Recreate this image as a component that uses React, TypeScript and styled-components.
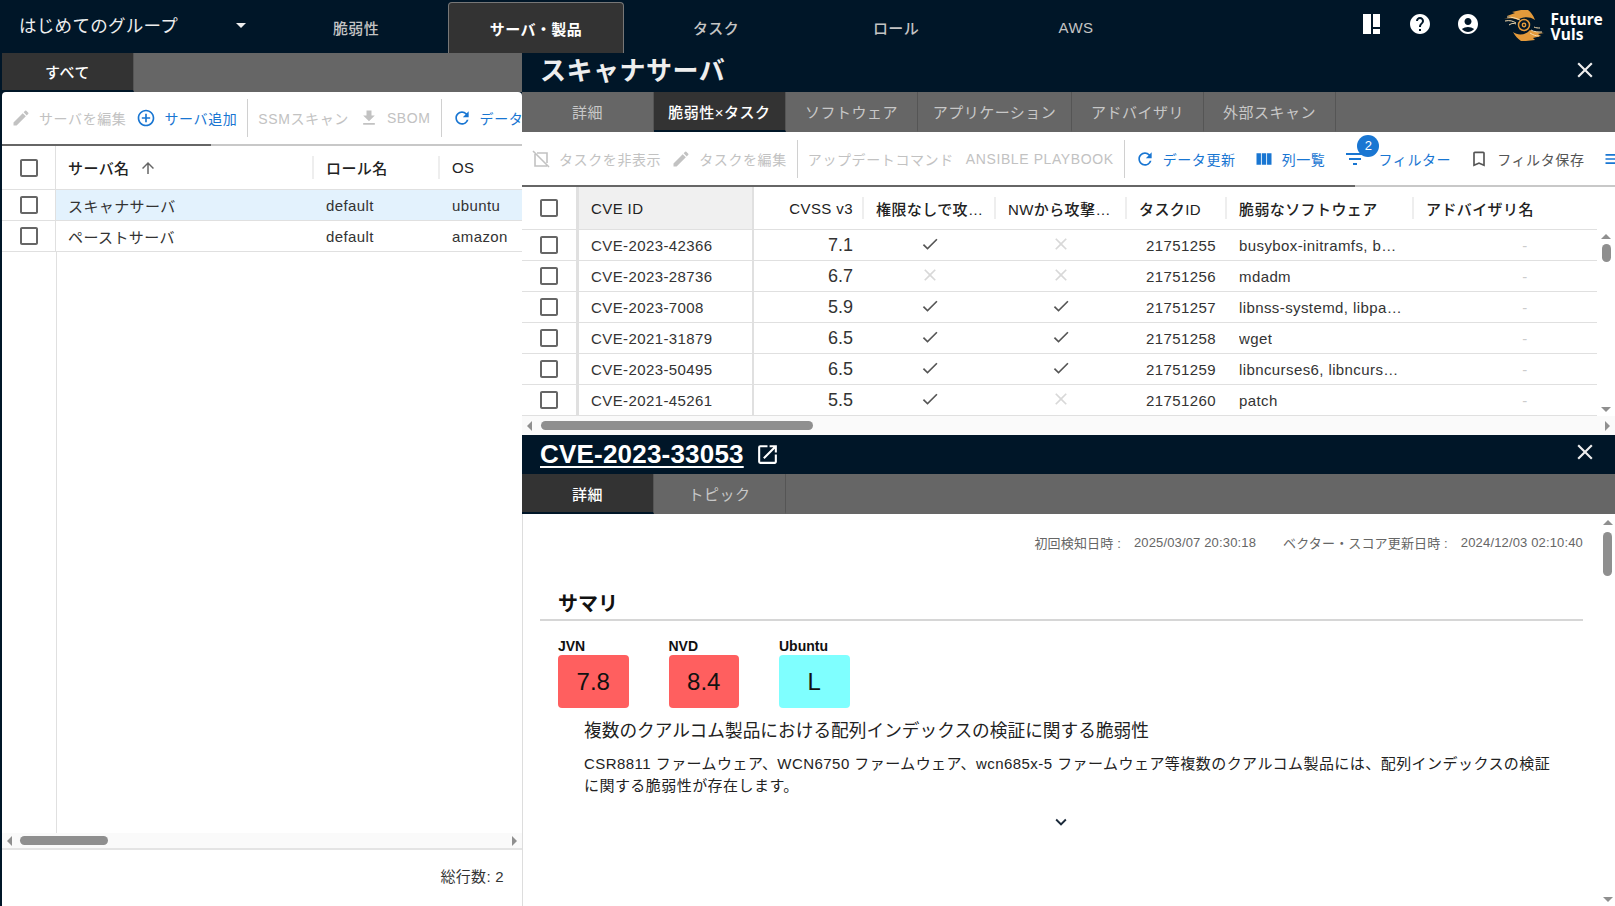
import styled, { createGlobalStyle } from "styled-components";
import {
  MdAccountCircle,
  MdAddCircleOutline,
  MdArrowDropDown,
  MdArrowUpward,
  MdBookmarkBorder,
  MdCheck,
  MdCheckBoxOutlineBlank,
  MdClose,
  MdEdit,
  MdExpandMore,
  MdFileDownload,
  MdFilterList,
  MdHelp,
  MdMenu,
  MdOpenInNew,
  MdRefresh,
  MdViewColumn,
} from "react-icons/md";

const SANS = `"Liberation Sans", "Noto Sans CJK JP", sans-serif`;
const NAVY = "#001628";

const GlobalStyle = createGlobalStyle`
  html, body {
    margin: 0;
    padding: 0;
    width: 1615px;
    height: 906px;
    overflow: hidden;
    background: ${NAVY};
    font-family: ${SANS};
  }
`;

const Page = styled.div`
  width: 1615px;
  height: 906px;
  display: flex;
  flex-direction: column;
  overflow: hidden;
`;

const Header = styled.header`
  height: 53px;
  flex: none;
  display: flex;
  align-items: flex-end;
  background: ${NAVY};
`;

const GroupSelect = styled.div`
  width: 266px;
  height: 53px;
  box-sizing: border-box;
  display: flex;
  align-items: center;
  padding: 0 13px 4px 19px;
  justify-content: space-between;
  color: #eee;
  font-size: 17.5px;
  letter-spacing: 0.3px;

  svg {
    font-size: 24px;
  }
`;

const Nav = styled.nav`
  display: flex;
  flex: 1;
  align-items: flex-end;
`;

const NavTab = styled.div<{ $active?: boolean }>`
  width: 176px;
  height: 51px;
  margin: 0 2px;
  box-sizing: border-box;
  display: flex;
  align-items: center;
  justify-content: center;
  font-size: 15px;
  font-weight: ${(p) => (p.$active ? 700 : 500)};
  letter-spacing: 0.4px;
  color: ${(p) => (p.$active ? "#fff" : "#c4c4c4")};
  background: ${(p) => (p.$active ? "#333" : "transparent")};
  border: ${(p) => (p.$active ? "1px solid #777" : "none")};
  border-bottom: none;
  border-radius: 4px 4px 0 0;
`;

const HeaderIcons = styled.div`
  height: 53px;
  display: flex;
  align-items: center;
  color: #fff;
  padding-right: 12px;
  padding-bottom: 5px;
  box-sizing: border-box;
`;

const HeaderIcon = styled.span`
  width: 48px;
  display: flex;
  justify-content: center;
  font-size: 24px;
`;

const LogoWrap = styled.div`
  display: flex;
  align-items: center;
  gap: 7px;
  margin: 3px 0 0 12px;
`;

const LogoText = styled.div`
  font-family: "Noto Sans", sans-serif;
  font-weight: 700;
  font-size: 15.5px;
  line-height: 14.5px;
  padding-top: 2px;
  color: #fff;
  letter-spacing: 0.2px;
`;

const Main = styled.main`
  flex: 1;
  display: flex;
  min-height: 0;
`;

const LeftPane = styled.section`
  width: 520px;
  margin-left: 2px;
  flex: none;
  display: flex;
  flex-direction: column;
`;

const RightPane = styled.section`
  flex: 1;
  min-width: 0;
  display: flex;
  flex-direction: column;
  background: #fff;
`;

const TabStrip = styled.div<{ $height?: number }>`
  height: ${(p) => p.$height ?? 40}px;
  flex: none;
  display: flex;
  background: #666;
`;

const PaneTab = styled.div<{ $active?: boolean; $wide?: boolean }>`
  width: ${(p) => (p.$wide ? 154 : 132)}px;
  box-sizing: border-box;
  display: flex;
  align-items: center;
  justify-content: center;
  font-size: 15px;
  font-weight: ${(p) => (p.$active ? 500 : 400)};
  letter-spacing: 0.5px;
  color: ${(p) => (p.$active ? "#fff" : "#c8c8c8")};
  background: ${(p) => (p.$active ? "#333" : "transparent")};
  border-right: 1px solid #555;
  border-bottom: 2px solid ${(p) => (p.$active ? NAVY : "transparent")};
`;

const Card = styled.div`
  flex: 1;
  min-height: 0;
  display: flex;
  flex-direction: column;
  background: #fff;
  border-radius: 4px 4px 0 0;
  overflow: hidden;
`;

const Toolbar = styled.div<{ $height: number }>`
  height: ${(p) => p.$height}px;
  flex: none;
  display: flex;
  align-items: center;
  padding-left: 4px;
  overflow: hidden;
  white-space: nowrap;
`;

const ToolButton = styled.div<{ $tone?: "off" | "blue" | "dark"; $ml?: number }>`
  flex: none;
  display: flex;
  align-items: center;
  gap: 8px;
  padding: 0 5px;
  margin-left: ${(p) => p.$ml ?? 0}px;
  font-size: 14px;
  letter-spacing: 0.6px;
  position: relative;
  color: ${(p) =>
    p.$tone === "blue" ? "#1976d2" : p.$tone === "dark" ? "#555" : "#c2c2c2"};

  svg {
    font-size: 20px;
    flex: none;
  }
`;

const FilterButton = styled(ToolButton)`
  gap: 11px;

  svg {
    font-size: 24px;
  }
`;

const ToolDivider = styled.span`
  flex: none;
  width: 1px;
  height: 38px;
  margin: 0 5px;
  background: #d0d0d0;
`;

const Badge = styled.span`
  position: absolute;
  left: 19px;
  top: -12px;
  width: 22px;
  height: 22px;
  border-radius: 50%;
  background: #1976d2;
  color: #fff;
  font-size: 13px;
  letter-spacing: 0;
  display: flex;
  align-items: center;
  justify-content: center;
`;

const Progress = styled.div<{ $done: number }>`
  height: 2px;
  flex: none;
  background: linear-gradient(
    to right,
    #666 ${(p) => p.$done}px,
    #c8c8c8 ${(p) => p.$done}px
  );
`;

const Row = styled.div<{ $cols: string; $height: number; $selected?: boolean }>`
  flex: none;
  display: grid;
  grid-template-columns: ${(p) => p.$cols};
  height: ${(p) => p.$height}px;
  box-sizing: border-box;
  border-bottom: 1px solid #e0e0e0;
  background: ${(p) => (p.$selected ? "#e3f2fd" : "#fff")};
`;

const CheckCell = styled.div<{ $thick?: boolean }>`
  display: flex;
  align-items: center;
  justify-content: center;
  color: #666;
  background: #fff;
  font-size: 24px;
  border-right: ${(p) => (p.$thick ? "3px" : "1px")} solid #e0e0e0;
`;

const HeadCell = styled.div<{ $right?: boolean; $sep?: boolean; $fill?: boolean }>`
  position: relative;
  display: flex;
  align-items: center;
  justify-content: ${(p) => (p.$right ? "flex-end" : "flex-start")};
  min-width: 0;
  padding: 0 11px 0 12px;
  font-size: 15px;
  font-weight: 500;
  letter-spacing: 0.4px;
  color: #222;
  background: ${(p) => (p.$fill ? "#f0f0f0" : "transparent")};
  border-right: ${(p) => (p.$fill ? "2px solid #e0e0e0" : "none")};

  &::after {
    content: "";
    display: ${(p) => (p.$sep ? "block" : "none")};
    position: absolute;
    right: 0;
    top: 10px;
    bottom: 10px;
    width: 2px;
    background: #eee;
  }

  svg {
    margin-left: 10px;
    color: #666;
    font-size: 18px;
  }
`;

const HeadLabel = styled.span`
  overflow: hidden;
  white-space: nowrap;
  text-overflow: ellipsis;
`;

const Cell = styled.div<{ $align?: "right" | "center"; $line?: boolean; $big?: boolean; $dash?: boolean }>`
  min-width: 0;
  display: flex;
  align-items: center;
  justify-content: ${(p) =>
    p.$align === "right" ? "flex-end" : p.$align === "center" ? "center" : "flex-start"};
  padding: 0 11px 0 12px;
  padding-left: ${(p) => (p.$dash ? 50 : 12)}px;
  font-size: ${(p) => (p.$big ? 18 : 15)}px;
  letter-spacing: ${(p) => (p.$big ? 0 : 0.4)}px;
  color: ${(p) => (p.$dash ? "#ccc" : "#333")};
  border-right: ${(p) => (p.$line ? "2px solid #e0e0e0" : "none")};
`;

const CellText = styled.span`
  overflow: hidden;
  white-space: nowrap;
  text-overflow: ellipsis;
`;

const Mark = styled.span<{ $off?: boolean }>`
  display: flex;
  margin: -3px 0 0 -2px;
  font-size: 20px;
  color: ${(p) => (p.$off ? "#d8d8d8" : "#555")};
`;

const Filler = styled.div`
  flex: 1;
  width: 54px;
  border-right: 1px solid #e0e0e0;
`;

const HScroll = styled.div<{ $height: number }>`
  height: ${(p) => p.$height}px;
  flex: none;
  display: flex;
  align-items: center;
  padding: 0 5px;
  background: #fafafa;
`;

const HThumb = styled.div<{ $width: number; $ml: number }>`
  width: ${(p) => p.$width}px;
  margin-left: ${(p) => p.$ml}px;
  height: 9px;
  border-radius: 5px;
  background: #8f8f8f;
`;

const Spacer = styled.div`
  flex: 1;
`;

const Arrow = styled.span<{ $dir: "left" | "right" | "up" | "down" }>`
  flex: none;
  width: 0;
  height: 0;
  border: 5px solid transparent;
  ${(p) =>
    p.$dir === "left"
      ? "border-right-color:#8f8f8f;border-left-width:0;"
      : p.$dir === "right"
        ? "border-left-color:#8f8f8f;border-right-width:0;"
        : p.$dir === "up"
          ? "border-bottom-color:#8f8f8f;border-top-width:0;"
          : "border-top-color:#8f8f8f;border-bottom-width:0;"}
`;

const Footer = styled.footer`
  height: 58px;
  flex: none;
  box-sizing: border-box;
  display: flex;
  align-items: center;
  justify-content: flex-end;
  padding: 0 18px 6px 0;
  border-top: 2px solid #e4e4e4;
  font-size: 15px;
  letter-spacing: 0.3px;
  color: #333;
`;

const TitleBar = styled.div`
  height: 39px;
  flex: none;
  display: flex;
  align-items: center;
  justify-content: space-between;
  padding: 0 17px 0 18px;
  background: ${NAVY};
  color: #eee;

  > svg {
    font-size: 26px;
    margin-top: -5px;
  }
`;

const PaneTitle = styled.h1`
  margin: -9px 0 0;
  font-size: 26px;
  font-weight: 700;
  letter-spacing: 0.5px;
`;

const CveLink = styled.a`
  display: flex;
  align-items: center;
  gap: 11px;
  color: #fff;
  font-size: 26px;
  font-weight: 700;
  text-decoration: underline;
  text-underline-offset: 3px;
  letter-spacing: 0.2px;

  svg {
    font-size: 25px;
  }
`;

const TableArea = styled.div`
  height: 229px;
  flex: none;
  display: flex;
`;

const TableColumn = styled.div`
  flex: 1;
  min-width: 0;
  display: flex;
  flex-direction: column;
`;

const VScroll = styled.div<{ $width: number; $top: number }>`
  width: ${(p) => p.$width}px;
  flex: none;
  box-sizing: border-box;
  padding: ${(p) => p.$top}px 0 4px;
  display: flex;
  flex-direction: column;
  align-items: center;
  background: #fff;
`;

const VThumb = styled.div<{ $height: number; $mt: number }>`
  width: 9px;
  height: ${(p) => p.$height}px;
  margin-top: ${(p) => p.$mt}px;
  border-radius: 5px;
  background: #8f8f8f;
`;

const DetailBody = styled.div`
  flex: 1;
  min-height: 0;
  display: flex;
  border-left: 1px solid #ddd;
  background: #fff;
`;

const DetailContent = styled.div`
  flex: 1;
  min-width: 0;
  box-sizing: border-box;
  padding: 19px 17px 0 17px;
`;

const MetaLine = styled.div`
  display: flex;
  justify-content: flex-end;
  align-items: center;
  gap: 27px;
  font-size: 13px;
  letter-spacing: 0.15px;
  color: #666;
`;

const MetaItem = styled.span`
  display: flex;
  align-items: center;
  gap: 13px;
`;

const SectionTitle = styled.h2`
  margin: 37px 0 0;
  padding: 0 0 0 18px;
  font-size: 20px;
  font-weight: 700;
  line-height: 30px;
  color: #111;
  border-bottom: 2px solid #d6d6d6;
`;

const Scores = styled.div`
  display: flex;
  gap: 40px;
  margin: 17px 0 0 18px;
`;

const Score = styled.div`
  width: 70.5px;
`;

const ScoreLabel = styled.div`
  font-size: 14px;
  font-weight: 700;
  line-height: 17px;
  color: #111;
`;

const ScoreBox = styled.div<{ $bg: string }>`
  height: 53px;
  border-radius: 4px;
  display: flex;
  align-items: center;
  justify-content: center;
  background: ${(p) => p.$bg};
  font-size: 24px;
  color: #111;
`;

const Summary = styled.div`
  padding: 10px 28px 0 44px;
`;

const SummaryTitle = styled.div`
  font-size: 17.7px;
  line-height: 27px;
  color: #222;
`;

const SummaryText = styled.p`
  margin: 8px 0 0;
  font-size: 15px;
  line-height: 21.5px;
  letter-spacing: 0.45px;
  color: #222;
`;

const MoreRow = styled.div`
  display: flex;
  justify-content: center;
  margin-top: 15px;
  padding-right: 2px;
  color: #1b2a3a;
  font-size: 22px;
`;

const LEFT_COLS = "54px 258px 126px 1fr";
const RIGHT_COLS = "57px 175px 110px 132px 131px 100px 187px 1fr";

type Vuln = {
  id: string;
  cvss: string;
  noAuth: boolean;
  network: boolean;
  task: string;
  software: string;
};

const vulns: Vuln[] = [
  { id: "CVE-2023-42366", cvss: "7.1", noAuth: true, network: false, task: "21751255", software: "busybox-initramfs, busybox-static" },
  { id: "CVE-2023-28736", cvss: "6.7", noAuth: false, network: false, task: "21751256", software: "mdadm" },
  { id: "CVE-2023-7008", cvss: "5.9", noAuth: true, network: true, task: "21751257", software: "libnss-systemd, libpam-systemd" },
  { id: "CVE-2021-31879", cvss: "6.5", noAuth: true, network: true, task: "21751258", software: "wget" },
  { id: "CVE-2023-50495", cvss: "6.5", noAuth: true, network: true, task: "21751259", software: "libncurses6, libncursesw6" },
  { id: "CVE-2021-45261", cvss: "5.5", noAuth: true, network: false, task: "21751260", software: "patch" },
];

const servers = [
  { name: "スキャナサーバ", role: "default", os: "ubuntu", selected: true },
  { name: "ペーストサーバ", role: "default", os: "amazon", selected: false },
];

function LayoutIcon() {
  return (
    <svg width="18" height="20" viewBox="0 0 18 20" fill="#fff">
      <rect x="0" y="0" width="8" height="20" />
      <rect x="10" y="0" width="7" height="13" />
      <rect x="10" y="15" width="7" height="5" />
    </svg>
  );
}

function HideIcon() {
  return (
    <svg width="20" height="20" viewBox="0 0 20 20" fill="none" stroke="#c2c2c2" strokeWidth="1.6">
      <path d="M6 4h10v10M16 17H4V5M2 2l16 16" />
    </svg>
  );
}

function Logo() {
  return (
    <svg width="40" height="33" viewBox="0 0 40 33">
      <path d="M0 10l7-2-4-1 8-3-3-1 9-2 7 0c3 2 5 5 7 10-6-4-13-3-17 0-4-2-9-2-14-1z" fill="#e39a3b" />
      <path d="M40 24l-6 1 3 2-8 2 2 2-9 1-5 0c-3-2-6-5-8-9 5 4 13 3 17-2 4 2 9 2 14 3z" fill="#e39a3b" />
      <path d="M3 8c5 0 9 1 13 3M1 12c5-1 8 0 11 2M5 16c3-2 5-2 7-1" stroke="#f7dcae" strokeWidth="1" fill="none" />
      <path d="M38 23c-4 0-8 0-11-2M35 27c-3 0-6-1-9-3M30 18c2 1 4 1 6 1" stroke="#f7dcae" strokeWidth="1" fill="none" />
      <circle cx="20" cy="16" r="5.5" fill={NAVY} stroke="#e39a3b" strokeWidth="1.5" />
      <circle cx="20" cy="16" r="2.4" fill="#e39a3b" />
      <circle cx="20" cy="16" r="1" fill={NAVY} />
    </svg>
  );
}

export default function App() {
  return (
    <Page>
      <GlobalStyle />
      <Header>
        <GroupSelect>
          はじめてのグループ
          <MdArrowDropDown />
        </GroupSelect>
        <Nav>
          <NavTab>脆弱性</NavTab>
          <NavTab $active>サーバ・製品</NavTab>
          <NavTab>タスク</NavTab>
          <NavTab>ロール</NavTab>
          <NavTab>AWS</NavTab>
        </Nav>
        <HeaderIcons>
          <HeaderIcon>
            <LayoutIcon />
          </HeaderIcon>
          <HeaderIcon>
            <MdHelp />
          </HeaderIcon>
          <HeaderIcon>
            <MdAccountCircle />
          </HeaderIcon>
          <LogoWrap>
            <Logo />
            <LogoText>
              Future
              <br />
              Vuls
            </LogoText>
          </LogoWrap>
        </HeaderIcons>
      </Header>

      <Main>
        <LeftPane>
          <TabStrip $height={39}>
            <PaneTab $active>すべて</PaneTab>
          </TabStrip>
          <Card>
            <Toolbar $height={52}>
              <ToolButton>
                <MdEdit />
                サーバを編集
              </ToolButton>
              <ToolButton $tone="blue">
                <MdAddCircleOutline />
                サーバ追加
              </ToolButton>
              <ToolDivider />
              <ToolButton>SSMスキャン</ToolButton>
              <ToolButton>
                <MdFileDownload />
                SBOM
              </ToolButton>
              <ToolDivider />
              <ToolButton $tone="blue">
                <MdRefresh />
                データ更新
              </ToolButton>
            </Toolbar>
            <Progress $done={209} />
            <Row $cols={LEFT_COLS} $height={44}>
              <CheckCell>
                <MdCheckBoxOutlineBlank />
              </CheckCell>
              <HeadCell $sep>
                サーバ名
                <MdArrowUpward />
              </HeadCell>
              <HeadCell $sep>ロール名</HeadCell>
              <HeadCell>OS</HeadCell>
            </Row>
            {servers.map((s) => (
              <Row key={s.name} $cols={LEFT_COLS} $height={31} $selected={s.selected}>
                <CheckCell>
                  <MdCheckBoxOutlineBlank />
                </CheckCell>
                <Cell>{s.name}</Cell>
                <Cell>{s.role}</Cell>
                <Cell>{s.os}</Cell>
              </Row>
            ))}
            <Filler />
            <HScroll $height={15}>
              <Arrow $dir="left" />
              <HThumb $width={88} $ml={8} />
              <Spacer />
              <Arrow $dir="right" />
            </HScroll>
            <Footer>総行数: 2</Footer>
          </Card>
        </LeftPane>

        <RightPane>
          <TitleBar>
            <PaneTitle>スキャナサーバ</PaneTitle>
            <MdClose />
          </TitleBar>
          <TabStrip>
            <PaneTab>詳細</PaneTab>
            <PaneTab $active>脆弱性×タスク</PaneTab>
            <PaneTab>ソフトウェア</PaneTab>
            <PaneTab $wide>アプリケーション</PaneTab>
            <PaneTab>アドバイザリ</PaneTab>
            <PaneTab>外部スキャン</PaneTab>
          </TabStrip>
          <Toolbar $height={53}>
            <ToolButton>
              <HideIcon />
              タスクを非表示
            </ToolButton>
            <ToolButton>
              <MdEdit />
              タスクを編集
            </ToolButton>
            <ToolDivider />
            <ToolButton>アップデートコマンド</ToolButton>
            <ToolButton $ml={2}>ANSIBLE PLAYBOOK</ToolButton>
            <ToolDivider />
            <ToolButton $tone="blue">
              <MdRefresh />
              データ更新
            </ToolButton>
            <ToolButton $tone="blue" $ml={8}>
              <MdViewColumn />
              列一覧
            </ToolButton>
            <FilterButton $tone="blue" $ml={8}>
              <MdFilterList />
              <Badge>2</Badge>
              フィルター
            </FilterButton>
            <ToolButton $tone="dark" $ml={8}>
              <MdBookmarkBorder />
              フィルタ保存
            </ToolButton>
            <ToolButton $tone="blue" $ml={8}>
              <MdMenu />
            </ToolButton>
          </Toolbar>
          <Progress $done={833} />
          <TableArea>
            <TableColumn>
              <Row $cols={RIGHT_COLS} $height={43}>
                <CheckCell $thick>
                  <MdCheckBoxOutlineBlank />
                </CheckCell>
                <HeadCell $fill>CVE ID</HeadCell>
                <HeadCell $right $sep>
                  CVSS v3
                </HeadCell>
                <HeadCell $sep>
                  <HeadLabel>権限なしで攻撃可能</HeadLabel>
                </HeadCell>
                <HeadCell $sep>
                  <HeadLabel>NWから攻撃可能</HeadLabel>
                </HeadCell>
                <HeadCell $sep>タスクID</HeadCell>
                <HeadCell $sep>脆弱なソフトウェア</HeadCell>
                <HeadCell>アドバイザリ名</HeadCell>
              </Row>
              {vulns.map((v) => (
                <Row key={v.id} $cols={RIGHT_COLS} $height={31}>
                  <CheckCell $thick>
                    <MdCheckBoxOutlineBlank />
                  </CheckCell>
                  <Cell $line>{v.id}</Cell>
                  <Cell $align="right" $big>
                    {v.cvss}
                  </Cell>
                  <Cell $align="center">
                    <Mark $off={!v.noAuth}>{v.noAuth ? <MdCheck /> : <MdClose />}</Mark>
                  </Cell>
                  <Cell $align="center">
                    <Mark $off={!v.network}>{v.network ? <MdCheck /> : <MdClose />}</Mark>
                  </Cell>
                  <Cell $align="right">{v.task}</Cell>
                  <Cell>
                    <CellText>{v.software}</CellText>
                  </Cell>
                  <Cell $align="center" $dash>
                    -
                  </Cell>
                </Row>
              ))}
            </TableColumn>
            <VScroll $width={18} $top={47}>
              <Arrow $dir="up" />
              <VThumb $height={18} $mt={5} />
              <Spacer />
              <Arrow $dir="down" />
            </VScroll>
          </TableArea>
          <HScroll $height={19}>
            <Arrow $dir="left" />
            <HThumb $width={272} $ml={9} />
            <Spacer />
            <Arrow $dir="right" />
          </HScroll>

          <TitleBar>
            <CveLink>
              CVE-2023-33053
              <MdOpenInNew />
            </CveLink>
            <MdClose />
          </TitleBar>
          <TabStrip>
            <PaneTab $active>詳細</PaneTab>
            <PaneTab>トピック</PaneTab>
          </TabStrip>
          <DetailBody>
            <DetailContent>
              <MetaLine>
                <MetaItem>
                  <span>初回検知日時 :</span>
                  <span>2025/03/07 20:30:18</span>
                </MetaItem>
                <MetaItem>
                  <span>ベクター・スコア更新日時 :</span>
                  <span>2024/12/03 02:10:40</span>
                </MetaItem>
              </MetaLine>
              <SectionTitle>サマリ</SectionTitle>
              <Scores>
                <Score>
                  <ScoreLabel>JVN</ScoreLabel>
                  <ScoreBox $bg="#ff5f5f">7.8</ScoreBox>
                </Score>
                <Score>
                  <ScoreLabel>NVD</ScoreLabel>
                  <ScoreBox $bg="#ff5f5f">8.4</ScoreBox>
                </Score>
                <Score>
                  <ScoreLabel>Ubuntu</ScoreLabel>
                  <ScoreBox $bg="#7fffff">L</ScoreBox>
                </Score>
              </Scores>
              <Summary>
                <SummaryTitle>複数のクアルコム製品における配列インデックスの検証に関する脆弱性</SummaryTitle>
                <SummaryText>
                  CSR8811 ファームウェア、WCN6750 ファームウェア、wcn685x-5
                  ファームウェア等複数のクアルコム製品には、配列インデックスの検証に関する脆弱性が存在します。
                </SummaryText>
              </Summary>
              <MoreRow>
                <MdExpandMore />
              </MoreRow>
            </DetailContent>
            <VScroll $width={15} $top={6}>
              <Arrow $dir="up" />
              <VThumb $height={44} $mt={7} />
              <Spacer />
              <Arrow $dir="down" />
            </VScroll>
          </DetailBody>
        </RightPane>
      </Main>
    </Page>
  );
}
